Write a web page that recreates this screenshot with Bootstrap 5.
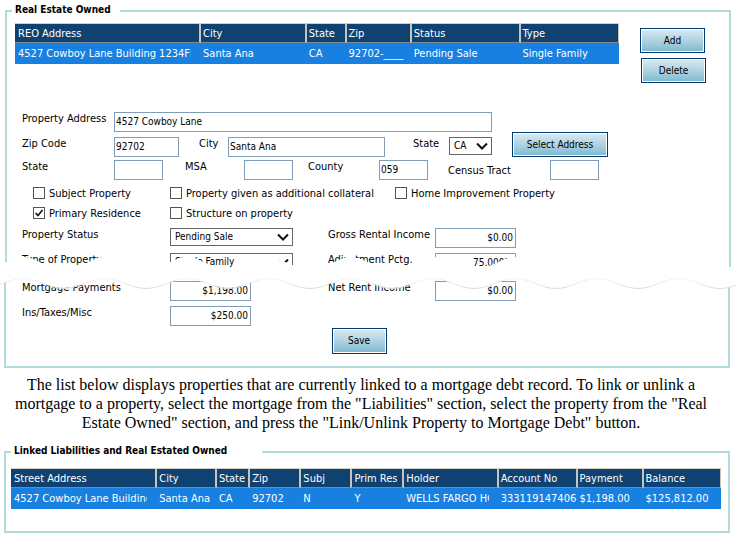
<!DOCTYPE html>
<html lang="en">
<head>
<meta charset="utf-8">
<meta name="viewport" content="width=device-width, initial-scale=1">
<title>Real Estate Owned</title>
<link href="https://cdn.jsdelivr.net/npm/bootstrap@5.3.0/dist/css/bootstrap.min.css" rel="stylesheet">
<style>
  :root { --edge: #b0dbdb; --navy: #104271; --pick: #1880e0; --field: #7f9db9; }
  body { font: 11px/13px "DejaVu Sans Condensed", "DejaVu Sans", sans-serif; color: #000; background: #fff; }
  .half-top, .half-bottom, .linked { border: 2px solid var(--edge); }
  .half-top { margin: 10px 5px 0; border-bottom: 0; padding: 0 8px; }
  .half-bottom { margin: 0 6px 0 4px; border-top: 0; padding: 0 16px 12px; }
  .linked { margin: 0 6px 1px 4px; padding: 0 7px 22px 5px; }
  .caption { font-size: 10px; font-weight: 700; line-height: 14px; background: #fff; width: max-content; }
  .half-top .caption { margin: -9px 0 6px -3px; padding: 0 9px 0 3px; }
  .linked .caption { margin: -9px 0 10px 0; padding: 0 35px 0 3px; }

  .data-grid { table-layout: fixed; width: 100%; border-collapse: separate; border-spacing: 0; color: #fff; }
  .data-grid th { font-weight: 400; background: var(--navy); height: 20px; padding: 0 2px; border-top: 1px solid #d4d0c8; border-right: 2px solid #c8c4bc; border-bottom: 1px solid #808890; }
  .data-grid th:last-child { border-right-width: 1px; }
  .data-grid td { background: var(--pick); height: 21px; padding: 0 0 0 2px; }
  .data-grid th, .data-grid td span { white-space: nowrap; overflow: hidden; }
  .data-grid th:first-child, .data-grid td:first-child { padding-left: 3px; }
  .data-grid td span { display: block; line-height: 16px; margin-right: 10px; }
  .data-grid td.wide span { margin-right: 0; }

  .cmd { --bs-btn-color: #000; --bs-btn-hover-color: #000; --bs-btn-border-radius: 0; --bs-btn-padding-x: 0; --bs-btn-padding-y: 0; --bs-btn-font-size: 10px; --bs-btn-line-height: 20px; --bs-btn-border-color: #003a70; --bs-btn-hover-border-color: #003a70;
    height: 25px; box-shadow: inset 0 0 0 1px #fff; background: linear-gradient(#d9eaf2, #b4d5e2 45%, #7db9d1); }
  .w-add { width: 65px; } .w-addr { width: 96px; margin: -5px 0 0 20px; } .w-save { width: 55px; height: 26px; margin-top: 2px; }
  .side { width: 66px; margin: 5px 15px 0 21px; gap: 5px; }

  .fields { padding: 0 6px 0 7px; margin-top: 29px; }
  .line { display: flex; align-items: flex-start; }
  .line + .line { margin-top: 5px; }
  .line + .line.near { margin-top: 3px; }
  .line label { white-space: nowrap; flex: none; }
  .box { height: 20px; border: 1px solid var(--field); border-radius: 0; padding: 0 2px 2px 1px; font-size: 10px; line-height: 15px; color: #000; min-width: 0; background: #fff; }
  .b-sm { width: 49px; } .b-zip { width: 65px; } .b-city { width: 157px; } .b-long { width: 378px; } .b-amt { width: 81px; text-align: right; }
  .pick { height: 18px; border: 1px solid #666; border-radius: 0; color: #000; font-size: 10px; line-height: 14px; padding: 0 16px 0 4px; appearance: none;
    background: #fff url("data:image/svg+xml,%3Csvg xmlns='http://www.w3.org/2000/svg' width='12' height='8'%3E%3Cpath d='M1 1.5L6 6.5L11 1.5' fill='none' stroke='%23111' stroke-width='2'/%3E%3C/svg%3E") no-repeat right 3px center; }
  .p-st { width: 43px; } .p-wide { width: 123px; }
  .l-first { width: 92px; } .l-city { width: 49px; padding-left: 20px; } .l-state { width: 64px; padding-left: 28px; }
  .l-msa { width: 81px; padding-left: 22px; } .l-county { width: 86px; padding-left: 15px; } .l-tract { width: 122px; padding-left: 20px; }
  .l-status { width: 148px; } .l-income { width: 142px; padding-left: 35px; } .l-net { width: 184px; padding-left: 77px; }
  .ticks { margin: 7px 0 8px 11px; display: grid; grid-template-columns: 137px 225px auto; row-gap: 7px; }
  .tick { display: flex; gap: 4px; min-height: 0; height: 13px; margin: 0; padding: 0; }
  .tick .form-check-input { float: none; margin: 0; width: 12px; height: 12px; flex: none; border: 1px solid #555; border-radius: 0; background-color: #fff; background-size: 10px; }
  .tick .form-check-input:checked { border-color: #555; background-color: #fff; background-image: url("data:image/svg+xml,%3Csvg xmlns='http://www.w3.org/2000/svg' viewBox='0 0 10 10'%3E%3Cpath d='M1.5 5L4 7.5L8.5 2' fill='none' stroke='%23111' stroke-width='1.6'/%3E%3C/svg%3E"); }
  .tear { display: block; position: relative; z-index: 1; height: 36px; margin: -19px 0 -9px; }
  .note { font: 16px/19px "Liberation Serif", "Times New Roman", serif; margin: 7px 24px 19px 10px; text-align: center; }
</style>
</head>
<body>
<main>
  <form>
    <section class="half-top">
      <h2 class="caption">Real Estate Owned</h2>
      <div class="d-flex align-items-start">
        <table class="data-grid flex-fill">
          <colgroup><col style="width:30.8%"><col style="width:17.5%"><col style="width:6.6%"><col style="width:10.8%"><col style="width:18%"><col></colgroup>
          <thead><tr><th>REO Address</th><th>City</th><th>State</th><th>Zip</th><th>Status</th><th>Type</th></tr></thead>
          <tbody><tr><td><span>4527 Cowboy Lane Building 1234FL</span></td><td><span>Santa Ana</span></td><td class="wide"><span>CA</span></td><td class="wide"><span>92702-____</span></td><td><span>Pending Sale</span></td><td class="wide"><span>Single Family</span></td></tr></tbody>
        </table>
        <div class="side d-flex flex-column flex-shrink-0">
          <button type="button" class="btn cmd w-add">Add</button>
          <button type="button" class="btn cmd w-add align-self-end">Delete</button>
        </div>
      </div>
      <div class="fields">
        <div class="line">
          <label class="l-first" for="addr">Property Address</label><input class="box b-long" id="addr" value="4527 Cowboy Lane">
        </div>
        <div class="line">
          <label class="l-first" for="zip">Zip Code</label><input class="box b-zip" id="zip" value="92702">
          <label class="l-city" for="city">City</label><input class="box b-city" id="city" value="Santa Ana">
          <label class="l-state" for="st">State</label><select class="pick p-st" id="st"><option>CA</option></select>
          <button type="button" class="btn cmd w-addr">Select Address</button>
        </div>
        <div class="line near">
          <label class="l-first" for="stc">State</label><input class="box b-sm" id="stc">
          <label class="l-msa" for="msa">MSA</label><input class="box b-sm" id="msa">
          <label class="l-county" for="county">County</label><input class="box b-sm" id="county" value="059">
          <label class="l-tract pt-1" for="tract">Census Tract</label><input class="box b-sm" id="tract">
        </div>
        <div class="ticks">
          <div class="form-check tick"><input class="form-check-input" type="checkbox" id="c1"><label for="c1">Subject Property</label></div>
          <div class="form-check tick"><input class="form-check-input" type="checkbox" id="c2"><label for="c2">Property given as additional collateral</label></div>
          <div class="form-check tick"><input class="form-check-input" type="checkbox" id="c3"><label for="c3">Home Improvement Property</label></div>
          <div class="form-check tick"><input class="form-check-input" type="checkbox" id="c4" checked><label for="c4">Primary Residence</label></div>
          <div class="form-check tick"><input class="form-check-input" type="checkbox" id="c5"><label for="c5">Structure on property</label></div>
        </div>
        <div class="line">
          <label class="l-status" for="ps">Property Status</label><select class="pick p-wide" id="ps"><option>Pending Sale</option></select>
          <label class="l-income" for="gri">Gross Rental Income</label><input class="box b-amt" id="gri" value="$0.00">
        </div>
        <div class="line">
          <label class="l-status" for="tp">Type of Property</label><select class="pick p-wide" id="tp"><option>Single Family</option></select>
          <label class="l-income" for="ap">Adjustment Pctg.</label><input class="box b-amt" id="ap" value="75.000%">
        </div>
      </div>
    </section>
    <svg class="tear w-100" aria-hidden="true">
      <defs>
        <linearGradient id="fade" gradientUnits="userSpaceOnUse" x1="0" y1="24" x2="0" y2="34"><stop offset="0" stop-color="#f6f6f6"/><stop offset="1" stop-color="#dcdcdc"/></linearGradient>
        <pattern id="wave" patternUnits="userSpaceOnUse" x="23" width="82" height="36">
          <path fill="#fff" d="M0 3C13 3 20 14 41 14S69 3 82 3V24C67 24 56 34 41 34S15 24 0 24Z"/>
          <path fill="none" stroke="url(#fade)" d="M0 24.5C15 24.5 26 34.5 41 34.5S67 24.5 82 24.5"/>
        </pattern>
      </defs>
      <rect width="100%" height="36" fill="url(#wave)"/>
    </svg>
    <section class="half-bottom">
      <div class="line">
        <label class="l-status" for="mp">Mortgage Payments</label><input class="box b-amt" id="mp" value="$1,198.00">
        <label class="l-net" for="nri">Net Rent Income</label><input class="box b-amt" id="nri" value="$0.00">
      </div>
      <div class="line">
        <label class="l-status" for="itm">Ins/Taxes/Misc</label><input class="box b-amt" id="itm" value="$250.00">
      </div>
      <div class="d-flex justify-content-center pe-3"><button type="submit" class="btn cmd w-save">Save</button></div>
    </section>
  </form>
  <p class="note">The list below displays properties that are currently linked to a mortgage debt record. To link or unlink a mortgage to a property, select the mortgage from the "Liabilities" section, select the property from the "Real Estate Owned" section, and press the "Link/Unlink Property to Mortgage Debt" button.</p>
  <section class="linked">
    <h2 class="caption">Linked Liabilities and Real Estated Owned</h2>
    <table class="data-grid">
      <colgroup><col style="width:20.6%"><col style="width:8.4%"><col style="width:4.7%"><col style="width:7.2%"><col style="width:7.2%"><col style="width:7.3%"><col style="width:13.3%"><col style="width:11.1%"><col style="width:9.3%"><col></colgroup>
      <thead><tr><th>Street Address</th><th>City</th><th>State</th><th>Zip</th><th>Subj</th><th>Prim Res</th><th>Holder</th><th>Account No</th><th>Payment</th><th>Balance</th></tr></thead>
      <tbody><tr><td><span>4527 Cowboy Lane Building</span></td><td class="wide"><span>Santa Ana</span></td><td class="wide"><span>CA</span></td><td class="wide"><span>92702</span></td><td><span>N</span></td><td><span>Y</span></td><td><span>WELLS FARGO HOME</span></td><td class="wide"><span>333119147406</span></td><td class="wide"><span>$1,198.00</span></td><td class="wide"><span>$125,812.00</span></td></tr></tbody>
    </table>
  </section>
</main>
<script src="https://cdn.jsdelivr.net/npm/bootstrap@5.3.0/dist/js/bootstrap.bundle.min.js"></script>
</body>
</html>
